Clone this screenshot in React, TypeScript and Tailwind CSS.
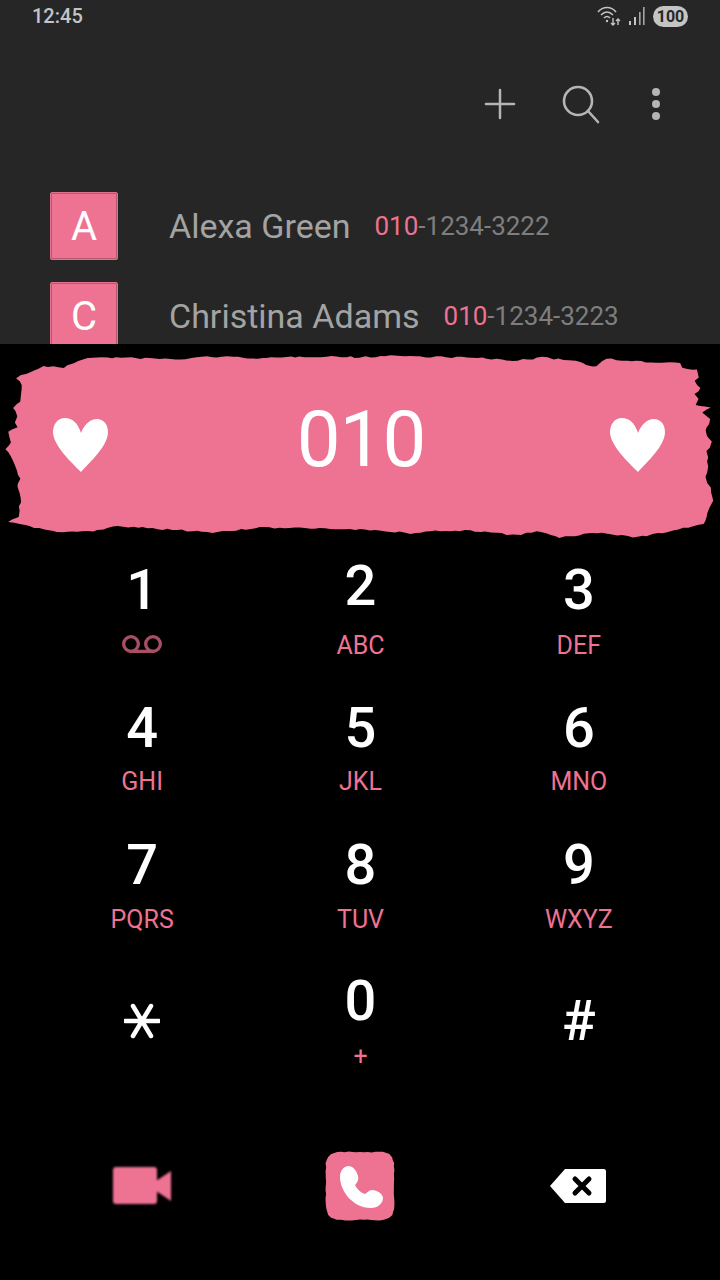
import React from 'react';
import { Plus, Voicemail } from 'lucide-react';

const pink = 'text-[#ee7292]';

const contacts = [
  { letter: 'A', name: 'Alexa Green', rest: '-1234-3222' },
  { letter: 'C', name: 'Christina Adams', rest: '-1234-3223' },
];

const keys = [
  { digit: '1', sub: 'voicemail', top: 'pt-[17px]', gap: 'mt-[15px]' },
  { digit: '2', sub: 'ABC', top: 'pt-[13px]', gap: 'mt-[18px]' },
  { digit: '3', sub: 'DEF', top: 'pt-[17px]', gap: 'mt-[14px]' },
  { digit: '4', sub: 'GHI', top: 'pt-[18px]', gap: 'mt-[12px]' },
  { digit: '5', sub: 'JKL', top: 'pt-[18px]', gap: 'mt-[12px]' },
  { digit: '6', sub: 'MNO', top: 'pt-[18px]', gap: 'mt-[12px]' },
  { digit: '7', sub: 'PQRS', top: 'pt-[18px]', gap: 'mt-[13px]' },
  { digit: '8', sub: 'TUV', top: 'pt-[18px]', gap: 'mt-[13px]' },
  { digit: '9', sub: 'WXYZ', top: 'pt-[18px]', gap: 'mt-[13px]' },
  { digit: 'star', sub: '', top: 'pt-[37px]', gap: 'mt-[0px]' },
  { digit: '0', sub: '+', top: 'pt-[17px]', gap: 'mt-[14px]' },
  { digit: '#', sub: '', top: 'pt-[37px]', gap: 'mt-[0px]' },
];

// rough outline points, roughen() adds the small paper tears between them
const bannerPoints: [number, number][] = [
  [17, 33], [43, 22], [63, 23], [83, 14], [107, 13], [150, 14], [180, 15], [207, 12], [243, 13], [267, 14], [300, 12], [337, 12],
  [360, 13], [390, 11], [420, 12], [467, 13], [517, 16], [543, 13], [580, 17], [587, 21], [597, 21], [607, 14], [627, 17], [680, 18],
  [682, 23], [697, 25], [698, 32], [695, 37], [700, 43], [695, 50], [698, 55], [695, 60], [710, 63], [702, 68], [710, 75], [705, 87],
  [712, 98], [707, 107], [708, 123], [705, 133], [710, 143], [713, 157], [708, 168], [707, 173], [703, 180], [637, 193], [593, 188],
  [560, 193], [537, 187], [517, 191], [470, 186], [440, 186], [410, 189], [380, 186], [360, 185], [260, 183], [217, 188], [167, 185],
  [123, 182], [113, 182], [93, 187], [57, 187], [40, 184], [20, 180], [8, 177], [18, 172], [21, 153], [17, 143], [20, 135], [13, 117],
  [9, 107], [6, 105], [11, 97], [8, 88], [17, 83], [14, 78], [18, 72], [13, 63], [21, 57], [21, 40],
];

const buttonPoints: [number, number][] = [
  [1, 12], [3, 6], [6, 3], [12, 1], [58, 1], [64, 3], [67, 6], [69, 12], [69, 58], [67, 64], [64, 67], [58, 69], [12, 69], [6, 67], [3, 64], [1, 58],
];

function roughen(points: [number, number][], step: number, amount: number) {
  let seed = 7;
  const noise = () => {
    seed = (seed * 16807) % 2147483647;
    return (seed / 2147483647 - 0.5) * 2 * amount;
  };
  const out: string[] = [];
  points.forEach(([x, y], i) => {
    const [nx, ny] = points[(i + 1) % points.length];
    const parts = Math.max(1, Math.round(Math.hypot(nx - x, ny - y) / step));
    for (let p = 0; p < parts; p++) {
      const t = p / parts;
      out.push(`${(x + (nx - x) * t + noise()).toFixed(1)} ${(y + (ny - y) * t + noise()).toFixed(1)}`);
    }
  });
  return 'M' + out.join(' L') + ' Z';
}

const Heart = () => (
  <svg width="56" height="56" viewBox="0 0 56 56" fill="white">
    <path d="M28 16 C25 6 19 1 12 1 C4 1 0 8 0 15 C0 28 18 45 28 55 C37 45 55 29 55 15 C55 7 50 2 44 2 C37 2 31 8 28 16 Z" />
  </svg>
);

const StarKey = () => (
  <svg width="36" height="36" viewBox="0 0 36 36" stroke="white" strokeWidth="4.5" strokeLinecap="round" fill="none">
    <path d="M1 18 H35 M9 3 L27 33 M27 3 L9 33" />
  </svg>
);

const App: React.FC = () => {
  return (
    <div className="w-[720px] h-[1280px] bg-black overflow-hidden flex flex-col font-['Roboto',sans-serif]">
      {/* top part with the contact matches */}
      <div className="h-[344px] shrink-0 bg-[#262626] overflow-hidden flex flex-col">
        <div className="h-[32px] shrink-0 flex items-center justify-between pl-[32px] pr-[32px]">
          <span className="text-[20px] text-[#c4c4c4] font-medium">12:45</span>
          <div className="flex items-center">
            <svg width="26" height="22" viewBox="0 0 26 22" fill="none" stroke="#c4c4c4" strokeWidth="1.6">
              <path d="M1 7 C6 1 14 1 19 7 M4 10 C8 6 12 6 16 10 M7 13 C9 11 11 11 13 13" />
              <circle cx="10" cy="16" r="1.2" fill="#c4c4c4" stroke="none" />
              <path d="M16 13 V20 M14 18 L16 20 L18 18 M21 20 V14 M19 16 L21 14 L23 16" strokeWidth="1.4" />
            </svg>
            <svg width="18" height="20" viewBox="0 0 18 20" fill="#c4c4c4" className="ml-[5px]">
              <rect x="1" y="15" width="2" height="4" />
              <rect x="6" y="11" width="2" height="8" />
              <rect x="11" y="6" width="1.6" height="13" opacity="0.8" />
              <rect x="15" y="1" width="1.6" height="18" opacity="0.8" />
            </svg>
            <div className="ml-[7px] w-[35px] h-[21px] rounded-full bg-[#c4c4c4] text-[#262626] text-[16px] font-bold leading-[21px] text-center">100</div>
          </div>
        </div>
        <div className="h-[80px] shrink-0 mt-[32px] flex items-center justify-end pr-[60px]">
          <Plus size={48} strokeWidth={1.25} className="text-[#b5b5b5]" />
          <svg width="40" height="40" viewBox="0 0 40 40" fill="none" stroke="#b5b5b5" strokeWidth="2.6" strokeLinecap="round" className="ml-[37px]">
            <circle cx="17" cy="17" r="14" />
            <path d="M27 27 L37 38" />
          </svg>
          <div className="flex flex-col gap-[4px] ml-[51px]">
            <div className="w-[8px] h-[8px] rounded-full bg-[#b5b5b5]" />
            <div className="w-[8px] h-[8px] rounded-full bg-[#b5b5b5]" />
            <div className="w-[8px] h-[8px] rounded-full bg-[#b5b5b5]" />
          </div>
        </div>
        <div className="flex flex-col shrink-0 gap-[22px] pl-[50px] mt-[48px]">
          {contacts.map(c => (
            <div key={c.letter} className="flex items-center h-[68px] shrink-0">
              <div className="w-[68px] h-[68px] bg-[#ee7292] border border-[#e0708d] shadow-[inset_0_0_0_1px_#b9596f] rounded-[2px] pt-[2px] flex items-center justify-center text-white text-[40px]">
                {c.letter}
              </div>
              <span className="ml-[51px] text-[34px] text-[#a3a3a3]">{c.name}</span>
              <span className="ml-[24px] text-[26px] text-[#7e7e7e]">
                <span className={pink}>010</span>
                {c.rest}
              </span>
            </div>
          ))}
        </div>
      </div>

      {/* torn paper number display */}
      <div className="relative h-[201px] shrink-0 flex items-center justify-between pl-[53px] pr-[54px]">
        <svg className="absolute left-0 top-0" width="720" height="201" viewBox="0 0 720 200" fill="#ee7292">
          <path d={roughen(bannerPoints, 5, 0.9)} />
        </svg>
        <div className="relative"><Heart /></div>
        <span className="relative text-[78px] text-white leading-none tracking-[-1px] mb-[10px] ml-[3px]">010</span>
        <div className="relative"><Heart /></div>
      </div>

      {/* keypad */}
      <div className="grid grid-cols-3 pl-[33px] pr-[32px]">
        {keys.map(k => (
          <div key={k.digit} className={`h-[137px] flex flex-col items-center ${k.top}`}>
            <div className="h-[56px] flex items-center justify-center text-white text-[56px] font-medium leading-none">
              {k.digit === 'star' ? <StarKey /> : k.digit}
            </div>
            <div className={`${k.gap} text-[25px] leading-[28px] ${pink}`}>
              {k.sub === 'voicemail' ? <Voicemail size={44} strokeWidth={1.8} className="text-[#a84f66] -mt-[11px]" /> : k.sub}
            </div>
          </div>
        ))}
      </div>

      {/* bottom actions */}
      <div className="grid grid-cols-3 items-center pl-[33px] pr-[32px] mt-[58px]">
        <div className="flex justify-center">
          <svg width="60" height="40" viewBox="0 0 60 40" fill="#ee7292" className="blur-[1px]">
            <rect x="1" y="1" width="44" height="37" rx="3" />
            <path d="M44 15 L59 5 V35 L44 25 Z" />
          </svg>
        </div>
        <div className="flex justify-center">
          <svg width="70" height="70" viewBox="0 0 70 70">
            <path d={roughen(buttonPoints, 4, 0.5)} fill="#ee7292" />
            <path transform="translate(15 15)" fill="white" d="M8 0 C3 1 0 5 0 11 C0 24 12 42 31 42 C38 42 43 37 43 32 C43 28 37 24 32 24 C29 24 27 27 25 28 C21 27 17 23 15 19 C17 17 19 14 18 10 C17 5 13 0 8 0 Z" />
          </svg>
        </div>
        <div className="flex justify-center">
          <svg width="58" height="36" viewBox="0 0 58 36" className="blur-[0.5px] -ml-[2px]">
            <path d="M16 1 H55 C56 1 57 2 57 3 V33 C57 34 56 35 55 35 H16 L1 18 Z" fill="white" />
            <path d="M26 11 L40 25 M40 11 L26 25" stroke="black" strokeWidth="5" strokeLinecap="round" />
          </svg>
        </div>
      </div>
    </div>
  );
};

export default App;
